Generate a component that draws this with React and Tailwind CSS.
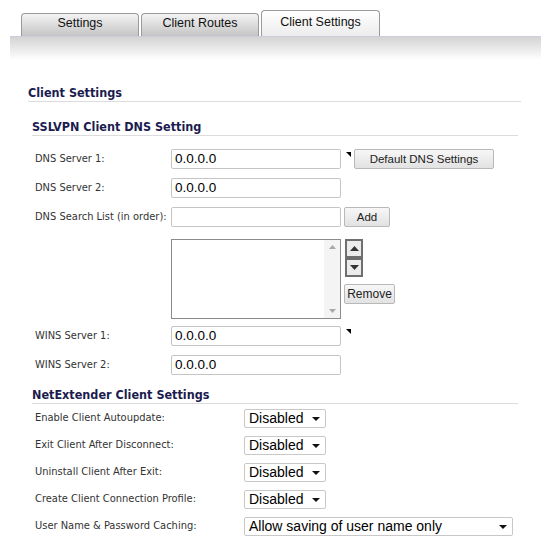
const labelFont = "font-['DejaVu_Sans_Condensed','DejaVu_Sans',sans-serif]";
const headFont = "font-['DejaVu_Sans_Condensed','DejaVu_Sans',sans-serif]";
const arial = "font-['Liberation_Sans',Arial,sans-serif]";

function Tab({ label, active }) {
  return (
    <div
      className={
        active
          ? `w-[119px] h-[26px] border border-b-0 border-[#9a9a9a] rounded-t-[4px] bg-linear-to-b from-white to-[#ececec] text-center leading-[23px] text-[12.5px] text-[#111] ${arial}`
          : `w-[118px] h-[23px] border border-b-0 border-[#9a9a9a] rounded-t-[4px] bg-linear-to-b from-[#f4f4f4] to-[#c4c4c4] text-center leading-[19px] text-[12.5px] text-[#111] ${arial}`
      }
    >
      {label}
    </div>
  );
}

function Marker() {
  return (
    <svg width="5" height="5" viewBox="0 0 5 5" className="self-start mt-[3px] ml-[5px]">
      <polygon points="0,0 5,0 5,5" fill="#000" />
    </svg>
  );
}

function TextInput({ value }) {
  return (
    <div
      className={`w-[170px] h-[20px] border border-[#c4c4c4] rounded-[2px] bg-white pl-[3px] text-[13.5px] leading-[18px] text-black ${arial}`}
    >
      {value}
    </div>
  );
}

function Button({ children, className }) {
  return (
    <div
      className={`h-[20px] border border-[#b8b8b8] rounded-[2px] bg-linear-to-b from-[#f7f7f7] to-[#e2e2e2] text-center text-[11.5px] leading-[18px] text-[#222] ${arial} ${className}`}
    >
      {children}
    </div>
  );
}

function Row({ label, children, className = "" }) {
  return (
    <div className={`flex items-center h-[20px] ${className}`}>
      <div className={`w-[136px] text-[11px] text-[#333] ${labelFont}`}>{label}</div>
      {children}
    </div>
  );
}

function Select({ value, wide }) {
  return (
    <div
      className={`${wide ? "w-[269px]" : "w-[82px]"} h-[19px] border border-[#c8c8c8] rounded-[2px] bg-white flex items-center pl-[4px] pr-[5px] text-[14px] text-black ${arial}`}
    >
      <span className="flex-1 leading-[17px]">{value}</span>
      <svg width="8" height="4" viewBox="0 0 8 4">
        <polygon points="0,0 8,0 4,4" fill="#111" />
      </svg>
    </div>
  );
}

function SelectRow({ label, value, wide, className = "" }) {
  return (
    <div className={`flex items-center h-[19px] ${className}`}>
      <div className={`w-[209px] text-[11px] text-[#333] ${labelFont}`}>{label}</div>
      <Select value={value} wide={wide} />
    </div>
  );
}

function ArrowButton({ up }) {
  return (
    <div className="w-[18px] h-[19px] border-2 border-[#6f6f6f] bg-[#ececec] flex items-center justify-center">
      <svg width="9" height="5" viewBox="0 0 9 5">
        <polygon points={up ? "0,5 9,5 4.5,0" : "0,0 9,0 4.5,5"} fill="#333" />
      </svg>
    </div>
  );
}

function SectionHeading({ children, className }) {
  return (
    <div className={`pb-[1px] border-b border-[#dcdcdc] ${className}`}>
      <div className={`text-[12.5px] leading-[14px] font-bold text-[#1b1b4f] ${headFont}`}>{children}</div>
    </div>
  );
}

export default function App() {
  return (
    <div className="w-[545px] h-[550px] bg-white overflow-hidden">
      {/* tab strip */}
      <div className="flex items-end gap-[2px] pl-[21px] h-[36px]">
        <Tab label="Settings" />
        <Tab label="Client Routes" />
        <Tab label="Client Settings" active />
      </div>
      <div className="ml-[10px] mr-[4px] h-[24px] border-t border-[#cdcddf] bg-linear-to-b from-[#d4d4d4] to-white" />

      {/* page heading */}
      <SectionHeading className="ml-[28px] w-[493px] mt-[26px]">Client Settings</SectionHeading>

      {/* DNS section */}
      <SectionHeading className="ml-[32px] w-[486px] mt-[18px]">SSLVPN Client DNS Setting</SectionHeading>

      <div className="pl-[35px]">
        <Row label="DNS Server 1:" className="mt-[13px]">
          <TextInput value="0.0.0.0" />
          <Marker />
          <Button className="w-[140px] ml-[3px]">Default DNS Settings</Button>
        </Row>
        <Row label="DNS Server 2:" className="mt-[9px]">
          <TextInput value="0.0.0.0" />
        </Row>
        <Row label="DNS Search List (in order):" className="mt-[9px]">
          <TextInput value="" />
          <Button className="w-[46px] ml-[3px]">Add</Button>
        </Row>

        <div className="flex mt-[12px]">
          <div className="w-[136px]" />
          <div className="w-[170px] h-[80px] border border-[#8a8a8a] bg-white flex justify-end">
            <div className="w-[16px] h-full bg-[#f4f4f4] flex flex-col justify-between items-center py-[5px]">
              <svg width="7" height="4" viewBox="0 0 7 4">
                <polygon points="0,4 7,4 3.5,0" fill="#a8a8a8" />
              </svg>
              <svg width="7" height="4" viewBox="0 0 7 4">
                <polygon points="0,0 7,0 3.5,4" fill="#a8a8a8" />
              </svg>
            </div>
          </div>
          <div className="ml-[4px] flex flex-col items-start">
            <ArrowButton up />
            <ArrowButton />
            <Button className="w-[51px] mt-[7px] -ml-[1px] text-[12px]">Remove</Button>
          </div>
        </div>

        <Row label="WINS Server 1:" className="mt-[7px]">
          <TextInput value="0.0.0.0" />
          <Marker />
        </Row>
        <Row label="WINS Server 2:" className="mt-[9px]">
          <TextInput value="0.0.0.0" />
        </Row>
      </div>

      {/* NetExtender section */}
      <SectionHeading className="ml-[32px] w-[486px] mt-[13px]">NetExtender Client Settings</SectionHeading>

      <div className="pl-[35px]">
        <SelectRow label="Enable Client Autoupdate:" value="Disabled" className="mt-[5px]" />
        <SelectRow label="Exit Client After Disconnect:" value="Disabled" className="mt-[8px]" />
        <SelectRow label="Uninstall Client After Exit:" value="Disabled" className="mt-[8px]" />
        <SelectRow label="Create Client Connection Profile:" value="Disabled" className="mt-[8px]" />
        <SelectRow label="User Name & Password Caching:" value="Allow saving of user name only" wide className="mt-[8px]" />
      </div>
    </div>
  );
}
